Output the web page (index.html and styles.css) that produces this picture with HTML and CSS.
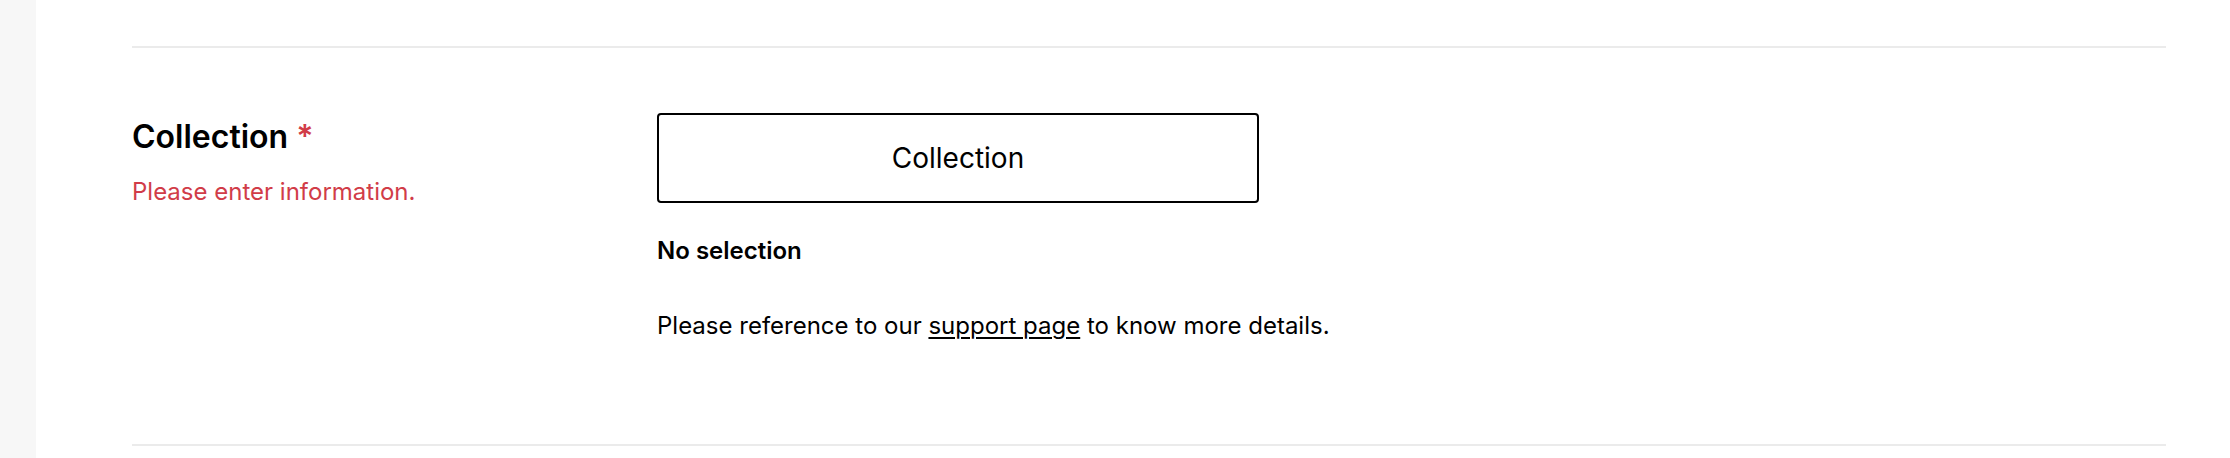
FILE: index.html
```html
<!DOCTYPE html>
<html lang="en">
<head>
<meta charset="utf-8">
<title>Collection</title>
<link rel="stylesheet" href="styles.css">
</head>
<body>
<div class="layout">
  <aside class="sidebar"></aside>
  <main class="main">
    <section class="field">
      <div class="field-label">
        <h2 class="label">Collection <span class="req">*</span></h2>
        <p class="error">Please enter information.</p>
      </div>
      <div class="field-control">
        <button class="picker" type="button">Collection</button>
        <p class="status">No selection</p>
        <p class="help">Please reference to our <a href="#" class="link">support page</a> to know more details.</p>
      </div>
    </section>
  </main>
</div>
</body>
</html>
```

FILE: styles.css
```css
* { box-sizing: border-box; }
html, body { margin: 0; padding: 0; background: #ffffff; }
body {
  font-family: Inter, "Noto Sans", "Liberation Sans", sans-serif;
  color: #000000;
}
.layout {
  display: flex;
  min-height: 458px;
}
.sidebar {
  width: 36px;
  flex: 0 0 36px;
  background: #f7f7f7;
}
.main {
  flex: 1;
  padding: 46px 64px 0 96px;
}
.field {
  display: grid;
  grid-template-columns: 525px 1fr;
  border-top: 2px solid #ebebeb;
  border-bottom: 2px solid #ebebeb;
  padding: 65px 0 100px;
}
.field-label { padding-top: 5px; }
.label {
  margin: 0;
  font-size: 32px;
  line-height: 38px;
  font-weight: 600;
}
.req { color: #d13c48; }
.error {
  margin: 18px 0 0;
  font-size: 24px;
  line-height: 36px;
  color: #d13c48;
}
.picker {
  display: block;
  width: 602px;
  height: 90px;
  border: 2px solid #000000;
  border-radius: 4px;
  background: #ffffff;
  font-family: inherit;
  font-size: 28px;
  color: #000000;
  padding: 0;
}
.status {
  margin: 30px 0 0;
  font-size: 24px;
  line-height: 36px;
  font-weight: 600;
}
.help {
  margin: 39px 0 0;
  font-size: 24px;
  line-height: 36px;
}
.link {
  color: #000000;
  text-decoration: underline;
  text-decoration-thickness: 2px;
  text-underline-offset: 3px;
}
```
